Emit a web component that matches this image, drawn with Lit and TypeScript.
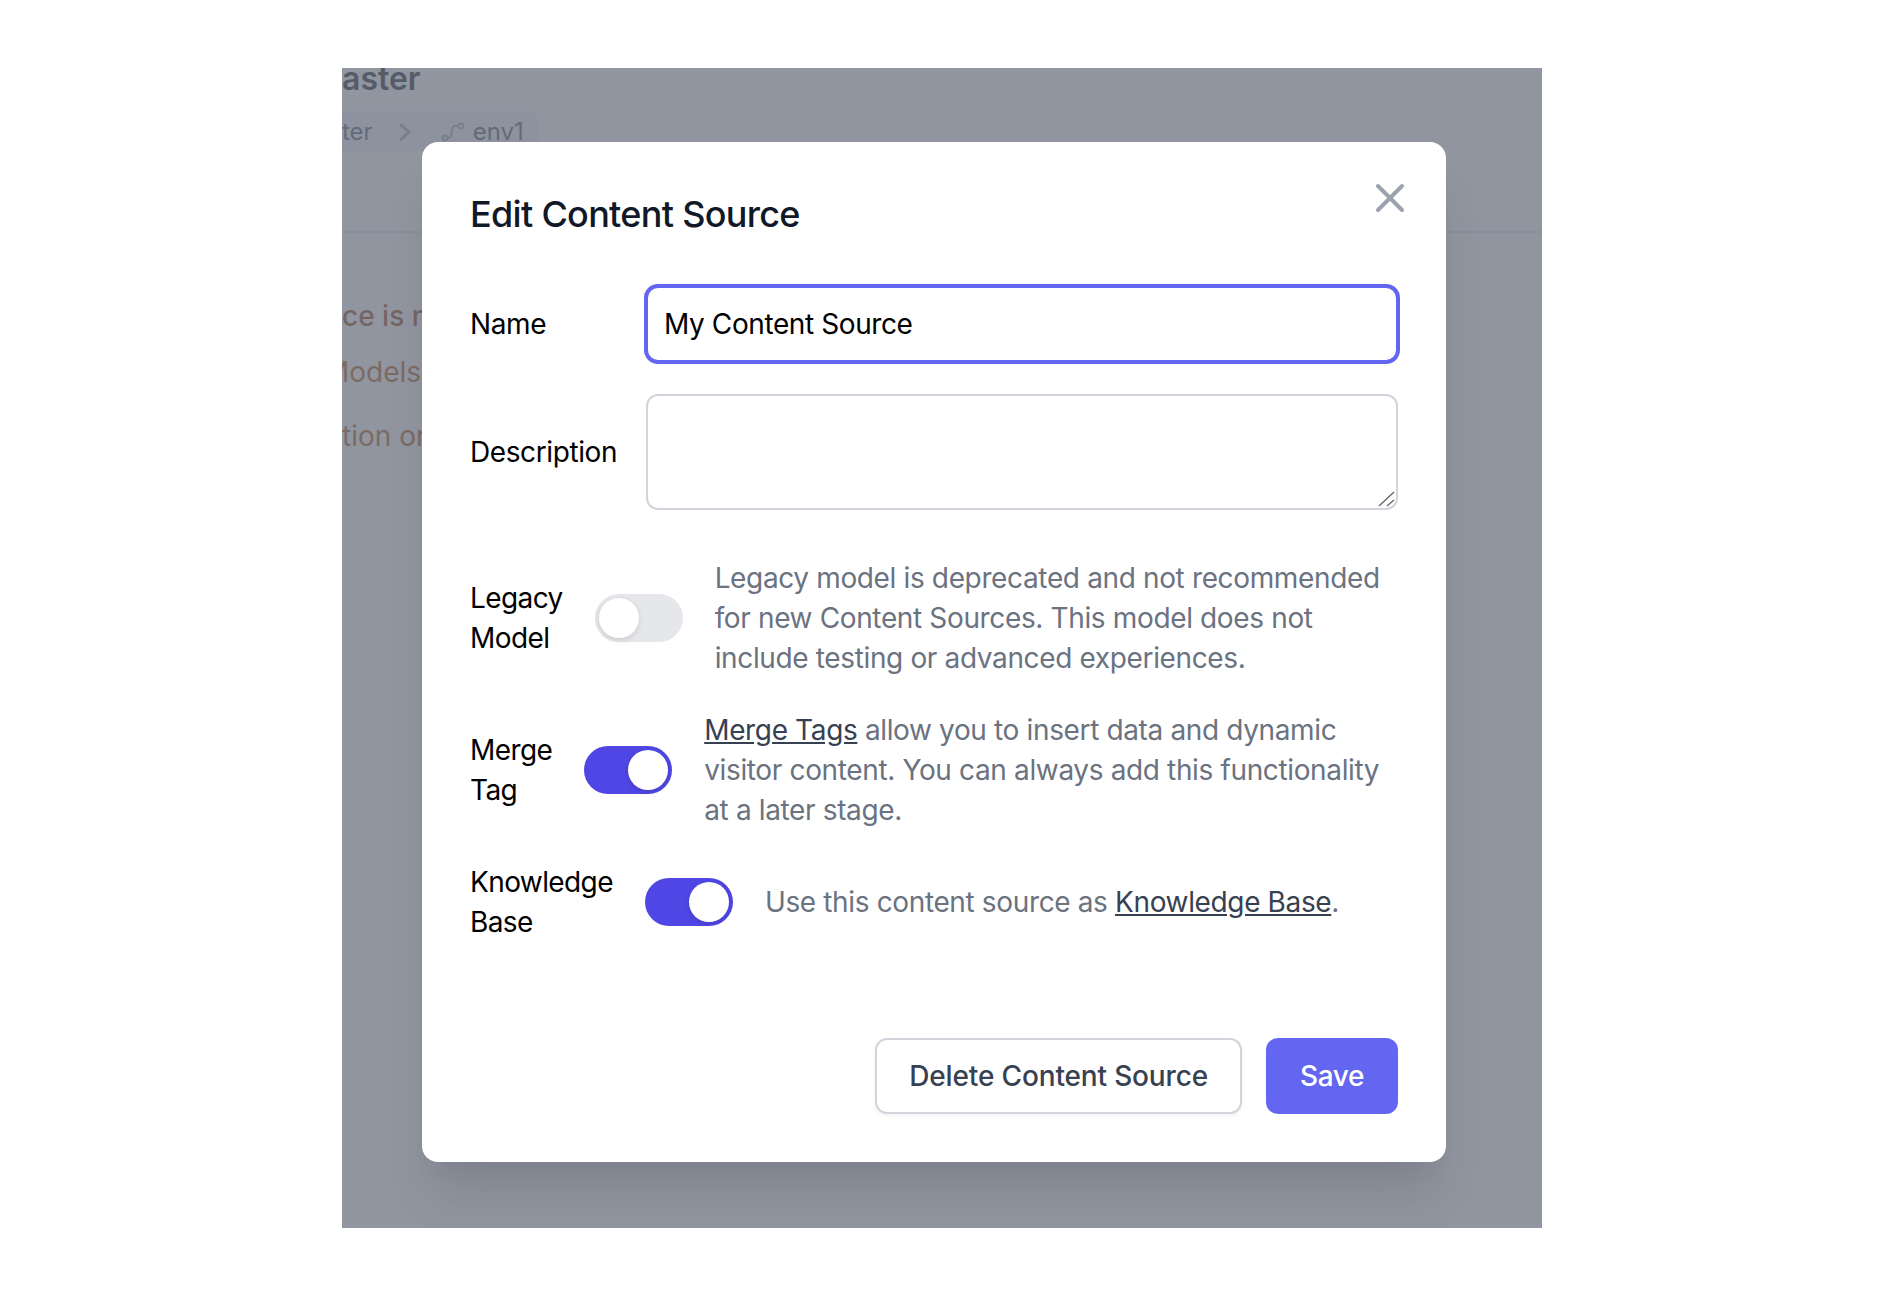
import {LitElement, css, html} from 'lit'
import {customElement} from 'lit/decorators.js'

@customElement('app-toggle')
export class AppToggle extends LitElement
{
    static properties = {on: {type: Boolean, reflect: true}}
    on = false

    render()
    {
        return html`<span class="track ${this.on ? "on" : ""}"><span class="knob"></span></span>`
    }

    static styles = css`
        :host
        {
            display: block;
            flex: none;
        }

        .track
        {
            box-sizing: border-box;
            display: flex;
            width: 88px;
            height: 48px;
            border: 4px solid transparent;
            border-radius: 24px;
            background-color: #e5e7eb;
        }

        .on
        {
            justify-content: flex-end;
            background-color: #4f46e5;
        }

        .knob
        {
            width: 40px;
            height: 40px;
            border-radius: 50%;
            background-color: white;
            box-shadow: 0 2px 6px rgba(0, 0, 0, 0.12);
        }
    `
}

@customElement('app-root')
export class AppRoot extends LitElement
{
    render()
    {
        return html`
            <div class="frame">
                <div class="under">
                    <div class="page-title">aster</div>
                    <div class="crumbs">
                        <span>ter</span>
                        <svg class="chevron" width="12" height="18" viewBox="0 0 12 18" fill="none">
                            <path d="M2 2l8 7-8 7.5" stroke="#9ca3af" stroke-width="3" stroke-linecap="round" stroke-linejoin="round"/>
                        </svg>
                        <svg class="branch" width="24" height="20" viewBox="0 0 24 20" fill="none">
                            <circle cx="4" cy="16" r="2.4" stroke="#9ca3af" stroke-width="2"/>
                            <circle cx="20" cy="4" r="2.4" stroke="#9ca3af" stroke-width="2"/>
                            <path d="M7 16h1c4 0 1-12 6-12h3" stroke="#9ca3af" stroke-width="2"/>
                        </svg>
                        <span>env1</span>
                    </div>
                    <div class="rule"></div>
                    <div class="notice strong">ce is not</div>
                    <div class="notice models">Models</div>
                    <div class="notice last">tion or</div>
                </div>
                <div class="overlay"></div>
                <div class="stage">
                    <div class="modal">
                        <button class="close" aria-label="Close">
                            <svg width="48" height="48" viewBox="0 0 24 24" fill="none">
                                <path d="M6 18L18 6M6 6l12 12" stroke="#9ca3af" stroke-width="2" stroke-linecap="round" stroke-linejoin="round"/>
                            </svg>
                        </button>
                        <h2>Edit Content Source</h2>
                        <div class="fields">
                            <label>Name</label>
                            <input class="name" type="text" .value=${"My Content Source"}>
                            <label>Description</label>
                            <div class="area">
                                <textarea></textarea>
                                <svg class="grip" width="18" height="18" viewBox="0 0 18 18" fill="none">
                                    <path d="M1 16L16 2M9 16l7-6" stroke="#6b6b6b" stroke-width="1.5"/>
                                </svg>
                            </div>
                        </div>
                        <div class="toggles">
                            <div class="row">
                                <span class="row-label">Legacy Model</span>
                                <app-toggle></app-toggle>
                                <p>Legacy model is deprecated and not recommended for new Content Sources. This model does not include testing or advanced experiences.</p>
                            </div>
                            <div class="row">
                                <span class="row-label">Merge Tag</span>
                                <app-toggle on></app-toggle>
                                <p><a href="#">Merge Tags</a> allow you to insert data and dynamic visitor content. You can always add this functionality at a later stage.</p>
                            </div>
                            <div class="row">
                                <span class="row-label">Knowledge Base</span>
                                <app-toggle on></app-toggle>
                                <p>Use this content source as <a href="#">Knowledge Base</a>.</p>
                            </div>
                        </div>
                        <div class="actions">
                            <button class="btn plain">Delete Content Source</button>
                            <button class="btn primary">Save</button>
                        </div>
                    </div>
                </div>
            </div>
        `
    }

    static styles = css`
        :host
        {
            display: block;
            height: 1302px;
            background-color: white;
            overflow: hidden;
        }

        *
        {
            font-family: "Inter", "Liberation Sans", sans-serif;
            box-sizing: border-box;
        }

        .frame
        {
            display: grid;
            width: 1200px;
            height: 1160px;
            margin-left: 342px;
            margin-top: 68px;
            overflow: hidden;
        }

        .under, .overlay, .stage
        {
            grid-area: 1 / 1;
        }

        .under
        {
            background-color: white;
            font-size: 28px;
            line-height: 40px;
        }

        .page-title
        {
            margin-top: -13px;
            font-size: 32px;
            line-height: 48px;
            font-weight: 600;
            color: #111827;
        }

        .crumbs
        {
            display: flex;
            align-items: center;
            width: 197px;
            height: 40px;
            margin-top: 8px;
            padding-top: 1px;
            border-radius: 0 12px 12px 0;
            background-color: #f3f4f6;
            color: #4b5563;
            font-size: 24px;
        }

        .chevron
        {
            margin-left: 26px;
        }

        .branch
        {
            margin-left: 30px;
            margin-right: 8px;
        }

        .rule
        {
            height: 2px;
            margin-top: 80px;
            background-color: #e5e7eb;
        }

        .notice
        {
            color: #b45309;
        }

        .strong
        {
            margin-top: 63px;
            font-weight: 500;
            color: #92400e;
        }

        .models
        {
            margin-top: 16px;
            margin-left: -18px;
        }

        .last
        {
            margin-top: 24px;
        }

        .overlay
        {
            background-color: rgba(107, 114, 128, 0.75);
        }

        .stage
        {
            padding: 74px 0 0 80px;
        }

        .modal
        {
            position: relative;
            width: 1024px;
            height: 1020px;
            padding: 48px;
            border-radius: 16px;
            background-color: white;
            box-shadow: 0 40px 50px -10px rgba(0, 0, 0, 0.1), 0 20px 20px -10px rgba(0, 0, 0, 0.04);
        }

        .close
        {
            position: absolute;
            top: 32px;
            right: 32px;
            display: block;
            width: 48px;
            height: 48px;
            padding: 0;
            border: none;
            background: none;
        }

        h2
        {
            margin: 0 0 48px 0;
            font-size: 36px;
            line-height: 48px;
            font-weight: 500;
            letter-spacing: -0.7px;
            color: #111827;
        }

        .fields
        {
            display: grid;
            grid-template-columns: 176px 752px;
            row-gap: 32px;
            align-items: center;
        }

        label, .row-label
        {
            font-size: 28px;
            line-height: 40px;
            letter-spacing: -0.4px;
            color: #000;
        }

        .name
        {
            width: 100%;
            height: 76px;
            padding: 0 16px;
            border: 2px solid #6366f1;
            border-radius: 12px;
            box-shadow: 0 0 0 2px #6366f1;
            outline: none;
            font-size: 28px;
            letter-spacing: -0.4px;
            color: #000;
        }

        .area
        {
            position: relative;
            height: 116px;
        }

        textarea
        {
            display: block;
            width: 100%;
            height: 100%;
            border: 2px solid #d1d5db;
            border-radius: 12px;
            outline: none;
            resize: none;
        }

        .grip
        {
            position: absolute;
            right: 2px;
            bottom: 2px;
        }

        .toggles
        {
            display: flex;
            flex-direction: column;
            gap: 32px;
            margin-top: 48px;
        }

        .row
        {
            display: flex;
            align-items: center;
            gap: 32px;
        }

        .row-label
        {
            width: min-content;
            flex: none;
            letter-spacing: -0.6px;
        }

        p
        {
            margin: 0;
            flex: 1;
            font-size: 28px;
            line-height: 40px;
            letter-spacing: -0.36px;
            color: #6b7280;
        }

        a
        {
            color: #374151;
            text-decoration: underline;
        }

        .actions
        {
            display: flex;
            justify-content: flex-end;
            gap: 24px;
            margin-top: 96px;
        }

        .btn
        {
            height: 76px;
            padding: 0 32px;
            border: 2px solid transparent;
            border-radius: 12px;
            font-size: 28px;
            font-weight: 500;
            letter-spacing: -0.15px;
        }

        .plain
        {
            border-color: #d1d5db;
            background-color: white;
            color: #374151;
            box-shadow: 0 2px 4px rgba(0, 0, 0, 0.05);
        }

        .primary
        {
            padding: 0 32px;
            letter-spacing: -0.4px;
            background-color: #6366f1;
            color: white;
        }
    `
}

declare global
{
    interface HTMLElementTagNameMap
    {
        'app-root': AppRoot
        'app-toggle': AppToggle
    }
}
